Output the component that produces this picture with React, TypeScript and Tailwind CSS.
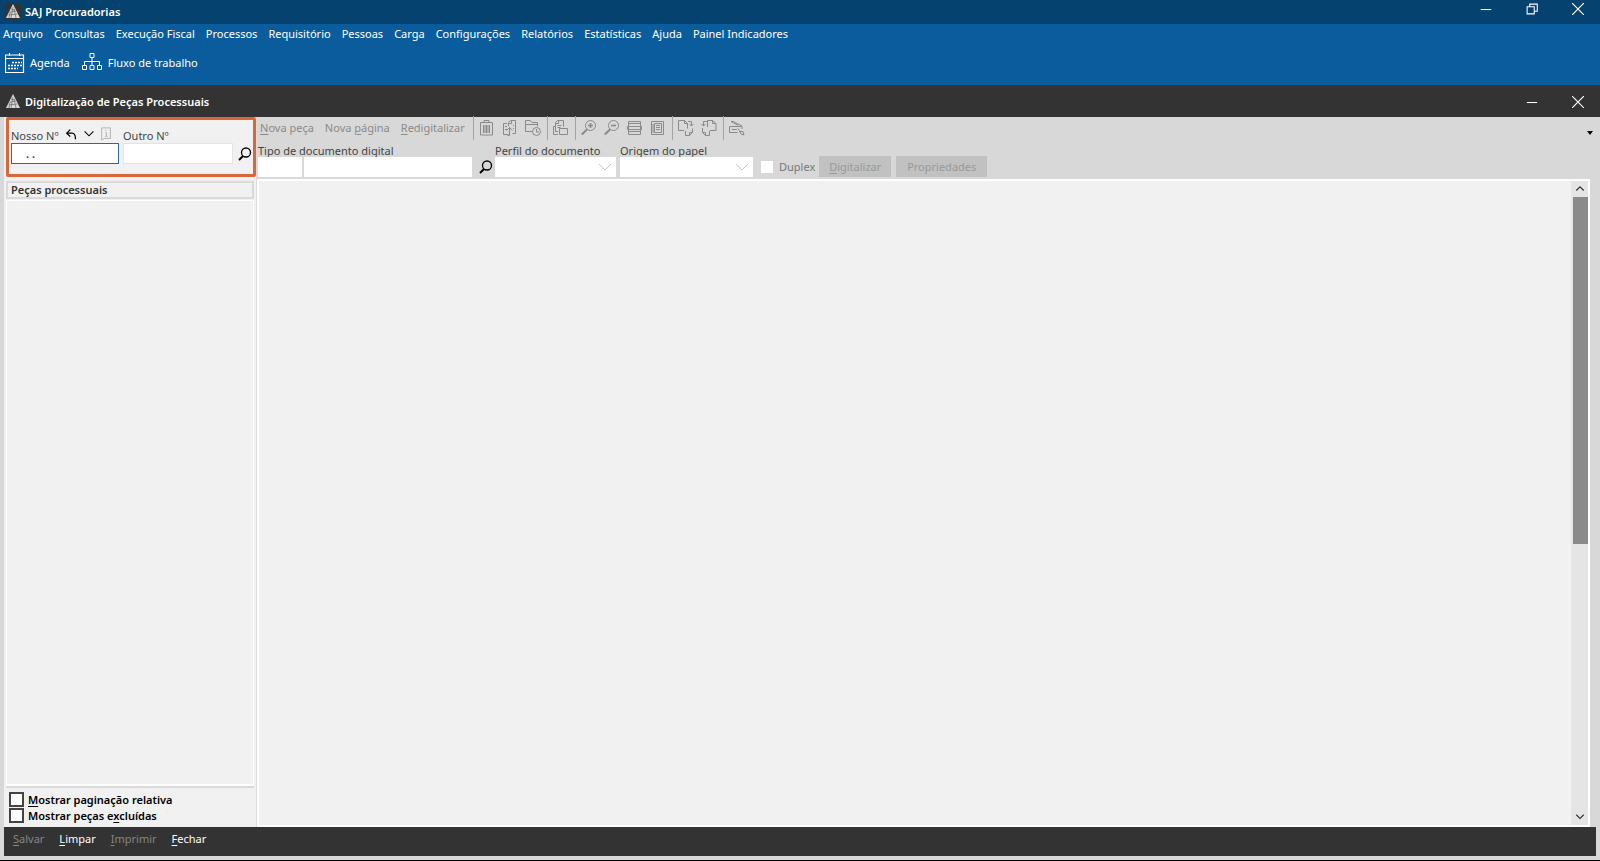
import React from 'react'

const MENU = [
  'Arquivo', 'Consultas', 'Execução Fiscal', 'Processos', 'Requisitório', 'Pessoas', 'Carga',
  'Configurações', 'Relatórios', 'Estatísticas', 'Ajuda', 'Painel Indicadores',
]

interface IconProps {
  children: React.ReactNode
  className?: string
}

function Icon({ children, className = 'w-4 h-4' }: IconProps) {
  return (
    <svg viewBox="0 0 16 16" fill="none" stroke="currentColor" className={`${className} shrink-0`} aria-hidden="true">
      {children}
    </svg>
  )
}

function Logo() {
  return (
    <span className="w-4 h-4 flex justify-center shrink-0 bg-[#333]">
      <svg viewBox="0 0 14 14" className="w-3.5 h-3.5" aria-hidden="true">
        <path d="M7 0L14 14H0Z" fill="#d9d9d9" />
        <path d="M5 5l4 1M4 8l6-1M2.500 11l9-1M7 3l-2 11M8 5l2 9M4 8l-1 6" stroke="#666" strokeWidth="0.7" fill="none" />
      </svg>
    </span>
  )
}

// Label with the accelerator letter underlined
function Hot({ text, at = 0 }: { text: string; at?: number }) {
  return (
    <span>
      {text.slice(0, at)}
      <span className="underline underline-offset-2">{text[at]}</span>
      {text.slice(at + 1)}
    </span>
  )
}

function Close() {
  return (
    <Icon className="w-3 h-3">
      <path d="M0 0L16 16M16 0L0 16" strokeWidth="1.600" />
    </Icon>
  )
}

function Minimize() {
  return <Icon className="w-3 h-3"><path d="M1 8.700H15" strokeWidth="1.400" /></Icon>
}

function Search() {
  return (
    <Icon>
      <circle cx="9" cy="6.500" r="4.500" strokeWidth="1.300" />
      <path d="M6 10L2 14" strokeWidth="1.900" />
    </Icon>
  )
}

function Separator() {
  return <span className="w-px -mr-px h-6 bg-[#a3a3a3] shrink-0" />
}

function Chevron() {
  return (
    <svg viewBox="0 0 14 8" fill="none" stroke="#c8c8c8" className="absolute right-1 top-1.5 w-3.5 h-2 pointer-events-none" aria-hidden="true">
      <path d="M1 1L7 7L13 1" />
    </svg>
  )
}

interface ToolProps {
  label: string
  children: React.ReactNode
}

function Tool({ label, children }: ToolProps) {
  return (
    <button type="button" aria-label={label} className="w-4 h-4">
      <Icon>{children}</Icon>
    </button>
  )
}

function Toolbar() {
  return (
    <div className="flex items-center h-[22px] pl-[3px] gap-2 text-[#8a8a8a]">
      <div className="flex gap-[11px]">
        <button type="button"><Hot text="Nova peça" /></button>
        <button type="button"><Hot text="Nova página" at={5} /></button>
        <button type="button"><Hot text="Redigitalizar" /></button>
      </div>
      <div className="flex items-center gap-1.5">
        <Separator />
        <div className="flex gap-[7px]">
          <Tool label="Excluir">
            <path d="M1.500 2.500h12v12.500h-12zM5 2V.5h5V2M4.500 5v8M7.500 5v8M10.500 5v8M6 5v8M9 5v8" />
          </Tool>
          <Tool label="Substituir">
            <path d="M5 3.500H1.500v11h5M3 6.500h2M3 9.500h2M6.500 6V2.500l2-2h5v13h-3M6.500 3.500h3v-3M11 5.500h1M11 8.500h1M5.500 15.500h2v-8M4.500 10.500l3-3 3 3" />
          </Tool>
          <Tool label="Histórico">
            <path d="M7 11.500H.5V.5h5l1.500 2h5.500v4M.5 4.500h12" />
            <circle cx="11.500" cy="11.500" r="4" />
            <path d="M11.500 9v3H14" />
          </Tool>
        </div>
        <Separator />
        <Tool label="Copiar">
          <path d="M5 14.500H.5V6.500h2M2.500 11.500v-9l2-2h6v6M2.500 3.500h3v-3M4.500 5.500h4M4.500 7.500h3M2.500 11.500H5" />
          <path d="M6.500 8.500h8v6h-8z" />
        </Tool>
        <Separator />
        <div className="flex gap-[7px]">
          <Tool label="Ampliar">
            <circle cx="9.500" cy="5.500" r="5" />
            <path d="M9.500 3v5M7 5.500h5" strokeWidth="1.600" />
            <path d="M6 9.500L.8 14.500" strokeWidth="2" />
          </Tool>
          <Tool label="Reduzir">
            <circle cx="9.500" cy="5.500" r="5" />
            <path d="M7 5.500h5" strokeWidth="1.600" />
            <path d="M6 9.500L.8 14.500" strokeWidth="2" />
          </Tool>
          <Tool label="Ajustar à largura">
            <path d="M1.500 1.500h12v13h-12zM2 3.500h11M.5 6.500h14v3H.5zM2 11.500h11" />
          </Tool>
          <Tool label="Página inteira">
            <path d="M1.500 1.500h12v13h-12zM4.500 3.500h7v9h-7zM6 5.500h4M6 7.500h4M6 9.500h4M3 4v9" />
          </Tool>
        </div>
        <Separator />
        <div className="flex gap-[7px]">
          <Tool label="Girar à direita">
            <path d="M6 10.500H.5V.5h6l3 3v5M6.500.5v3h3M10 1.500h3.500V6M11.500 4l2 2 2-2M7.500 11v4.500h4l3-3V8.500M11.500 15.500v-3h3" />
          </Tool>
          <Tool label="Girar à esquerda">
            <path d="M6.500 7V.5h5l3.500 3v7H9M11.500.5v3h3M6 1.500H2.500V6M.5 4l2 2 2-2M1.500 8v4.500l3 3h4V11M1.500 12.500h3v3" />
          </Tool>
        </div>
        <Separator />
        <Tool label="Configurar scanner">
          <path d="M2 1.500h2l9 4.500v3M2 1.500l7 4M.5 6.500H12M.5 6.500v6h8M3 9.500h5" />
          <path d="M9 8.500l2 3h3l1 3.500-3-1-1.500-3" />
        </Tool>
      </div>
    </div>
  )
}

function ScanFields() {
  return (
    <div className="flex items-end h-[38px] pl-px">
      <div className="flex flex-col">
        <label htmlFor="tipo" className="leading-3">Tipo de documento digital</label>
        <div className="flex gap-0.5">
          <input id="tipo" className="w-11 h-5 bg-white" />
          <input aria-label="Descrição do tipo" className="w-[168px] h-5 bg-white" />
        </div>
      </div>
      <button type="button" aria-label="Pesquisar tipo" className="ml-1.5 mb-0.5 w-4 h-4 text-black"><Search /></button>
      <div className="flex flex-col ml-px">
        <label htmlFor="perfil" className="leading-3">Perfil do documento</label>
        <div className="relative">
          <select id="perfil" className="appearance-none block w-[121px] h-5 bg-white" />
          <Chevron />
        </div>
      </div>
      <div className="flex flex-col ml-1">
        <label htmlFor="origem" className="leading-3">Origem do papel</label>
        <div className="relative">
          <select id="origem" className="appearance-none block w-[133px] h-5 bg-white" />
          <Chevron />
        </div>
      </div>
      <label className="flex items-center h-5 ml-2 gap-1.5 text-[#777]">
        <input type="checkbox" className="appearance-none w-3 h-3 bg-white" />
        Duplex
      </label>
      <button type="button" className="ml-1 w-[72px] h-[21px] bg-[#c1c1c1] text-[#999]"><Hot text="Digitalizar" /></button>
      <button type="button" className="ml-[5px] w-[91px] h-[21px] bg-[#c1c1c1] text-[#999]">Propriedades</button>
    </div>
  )
}

function Sidebar() {
  return (
    <aside className="w-[253px] shrink-0 flex flex-col pl-0.5 bg-[#f1f1f1] border-r border-[#dcdcdc]">
      <div className="h-[60px] border-3 border-[#d8673a] rounded-xs flex pl-0.5 pt-1.5 gap-1 shrink-0">
        <div className="w-[108px] shrink-0">
          <div className="flex items-end h-[17px] gap-1.5">
            <label htmlFor="nosso" className="leading-3.5">Nosso Nº</label>
            <div className="flex gap-[3px] pb-0.5 text-black">
              <button type="button" aria-label="Desfazer">
                <Icon className="w-3.5 h-3.5"><path d="M6 3L2 7l4 4M2 7h6q4 0 4 7" strokeWidth="1.500" /></Icon>
              </button>
              <button type="button" aria-label="Mais opções">
                <Icon className="w-3.5 h-3.5"><path d="M3 5l5 5 5-5" strokeWidth="1.200" /></Icon>
              </button>
              <button type="button" aria-label="Informações" className="text-[#aaa]">
                <Icon className="w-3.5 h-3.5"><path d="M3 1h10v12H6l-3 2zM8 3v1.500M7 6.500h1.500V10M7 10.500h3" /></Icon>
              </button>
            </div>
          </div>
          <input id="nosso" defaultValue=". ." className="block w-full h-[21px] pl-3.5 bg-white border border-[#226d9c] outline-none font-bold" />
        </div>
        <div className="w-[110px] shrink-0">
          <label htmlFor="outro" className="flex items-end h-[17px] leading-3.5">Outro Nº</label>
          <input id="outro" className="block w-full h-[21px] bg-white border border-[#e4e4e4]" />
        </div>
        <button type="button" aria-label="Pesquisar processo" className="self-start mt-5 w-4 h-4 text-black"><Search /></button>
      </div>
      <h2 className="mt-1 mr-0.5 h-[18px] px-[3px] border-2 border-[#dadada] leading-[14px] font-semibold text-[#333]">Peças processuais</h2>
      <div className="mt-px mr-0.5 flex-1 border border-white border-b-2 shadow-[0_2px_0_#dadada]" />
      <div className="h-[41px] shrink-0 pt-1.5 pl-[3px] flex flex-col gap-px text-black font-semibold">
        <label className="flex items-center gap-1 h-[15px]">
          <input type="checkbox" className="appearance-none w-[15px] h-[15px] bg-white border-2 border-[#444]" />
          <Hot text="Mostrar paginação relativa" />
        </label>
        <label className="flex items-center gap-1 h-[15px]">
          <input type="checkbox" className="appearance-none w-[15px] h-[15px] bg-white border-2 border-[#444]" />
          <Hot text="Mostrar peças excluídas" at={15} />
        </label>
      </div>
    </aside>
  )
}

function Viewer() {
  return (
    <div className="flex-1 mr-2.5 flex bg-[#f1f1f1] border-2 border-white">
      <div className="flex-1" />
      <div className="w-[17px] flex flex-col items-end bg-[#e5e5e5] text-[#333]">
        <button type="button" aria-label="Rolar para cima" className="w-[17px] h-4 flex items-center justify-center">
          <Icon className="w-3 h-3"><path d="M3 10l5-5 5 5" strokeWidth="1.500" /></Icon>
        </button>
        <div className="w-[15px] h-[347px] bg-[#8a8a8a]" />
        <button type="button" aria-label="Rolar para baixo" className="mt-auto w-[17px] h-4 flex items-center justify-center">
          <Icon className="w-3 h-3"><path d="M3 5l5 5 5-5" strokeWidth="1.500" /></Icon>
        </button>
      </div>
    </div>
  )
}

export default function App() {
  return (
    <div className="h-screen flex flex-col bg-[#d8d8d8] border-b border-black font-['Noto_Sans',sans-serif] text-[11px] leading-4 text-[#444]">
      <header className="text-white">
        <div className="h-6 flex items-center px-[5px] bg-[#054270]">
          <Logo />
          <h1 className="ml-1 font-semibold">SAJ Procuradorias</h1>
          <div className="ml-auto mb-1.5 mr-[11px] flex items-center gap-[34px]">
            <button type="button" aria-label="Minimizar"><Minimize /></button>
            <button type="button" aria-label="Restaurar">
              <Icon className="w-3 h-3"><path d="M1.500 5h9.500v9.500H1.500zM5 5V1.500h10V11h-4" strokeWidth="1.400" /></Icon>
            </button>
            <button type="button" aria-label="Fechar janela"><Close /></button>
          </div>
        </div>
        <div className="h-[61px] bg-[#0b5c9d]">
          <nav className="flex gap-[11px] px-[3px] pt-0.5">
            {MENU.map(item => <button type="button" key={item}>{item}</button>)}
          </nav>
          <div className="flex items-center gap-3 px-[5px] pt-[11px]">
            <button type="button" className="flex items-center gap-[5px]">
              <svg viewBox="0 0 20 20" fill="none" stroke="white" className="w-5 h-5" aria-hidden="true">
                <path d="M.5 2h18v17.500H.5zM1 5.500h18M4.500 0v3M14.500 0v3" strokeWidth="1.200" />
                <path d="M7 9.500h10M3 12.500h14M3 15.500h10" strokeWidth="1.400" strokeDasharray="2 1" />
              </svg>
              Agenda
            </button>
            <button type="button" className="flex items-center gap-1.5">
              <svg viewBox="0 0 20 20" fill="none" stroke="white" className="w-5 h-5" aria-hidden="true">
                <path d="M8 .5h4v4H8zM.5 12.500h4v4h-4zM8 12.500h4v4H8zM15.500 12.500h4v4h-4zM10 4.500v8M2.500 12V8.500h15V12" />
              </svg>
              Fluxo de trabalho
            </button>
          </div>
        </div>
        <div className="h-8 flex items-center px-[5px] pt-px bg-[#333]">
          <Logo />
          <h2 className="ml-1 font-semibold">Digitalização de Peças Processuais</h2>
          <div className="ml-auto mr-[11px] flex items-center gap-[34px]">
            <button type="button" aria-label="Minimizar digitalização"><Minimize /></button>
            <button type="button" aria-label="Fechar digitalização"><Close /></button>
          </div>
        </div>
      </header>
      <main className="flex-1 min-h-0 flex ml-1">
        <Sidebar />
        <section className="flex-1 flex flex-col min-w-0">
          <div className="h-[62px] flex justify-between">
            <div className="pb-0.5">
              <Toolbar />
              <ScanFields />
            </div>
            <button type="button" aria-label="Opções da barra" className="self-start mt-3.5 mr-[7px] text-black">
              <svg viewBox="0 0 6 4" className="w-1.5 h-1" aria-hidden="true"><path d="M0 0h6L3 4z" fill="currentColor" /></svg>
            </button>
          </div>
          <Viewer />
        </section>
      </main>
      <footer className="mx-1 mb-1 h-[29px] flex items-start pt-1 pl-[9px] gap-[15px] bg-[#333] text-white">
        <button type="button" className="text-[#868686]"><Hot text="Salvar" /></button>
        <button type="button"><Hot text="Limpar" /></button>
        <button type="button" className="text-[#868686]"><Hot text="Imprimir" /></button>
        <button type="button"><Hot text="Fechar" /></button>
      </footer>
    </div>
  )
}
